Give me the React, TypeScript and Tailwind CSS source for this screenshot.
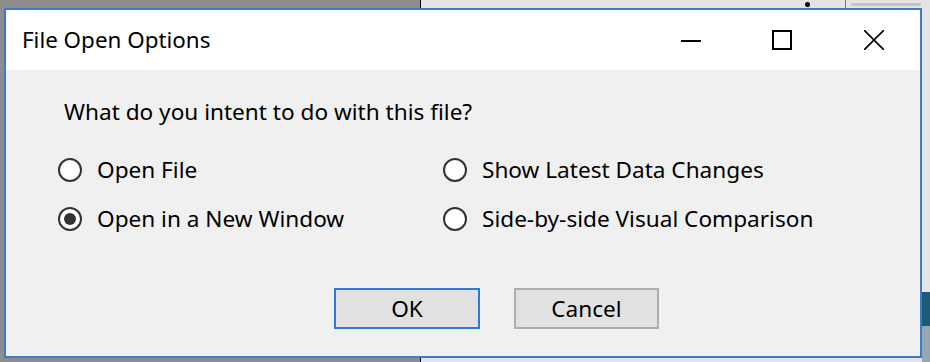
import React from 'react';

const font = { fontFamily: '"Noto Sans", "Open Sans", Arial, sans-serif' };

const Radio = ({ checked, label }: { checked?: boolean; label: string }) => (
  <label className="flex items-center gap-[15px] h-[28px]">
    <span className="w-[24px] h-[24px] rounded-full border-2 border-[#333333] bg-white flex items-center justify-center">
      {checked && <span className="w-[12px] h-[12px] rounded-full bg-[#333333]" />}
    </span>
    <span className="text-[22.6px] text-black leading-[28px]">{label}</span>
  </label>
);

export default function App() {
  return (
    <div className="relative w-[930px] h-[362px] overflow-hidden bg-[#8d8d8d]" style={font}>
      {/* desktop behind the dialog */}
      <div className="absolute left-[420px] top-0 right-0 bottom-0 bg-[#e4e4e4] border-l border-black">
        <div className="absolute left-[384px] top-[2px] w-[5px] h-[5px] rounded-full bg-black" />
        <div className="absolute left-[424px] top-[0px] w-[1px] h-[8px] bg-[#777777]" />
        <div className="absolute left-[430px] top-[3px] w-[70px] h-[3px] bg-[#c4c4c4]" />
      </div>
      <div className="absolute left-[922px] top-[292px] w-[8px] h-[34px] bg-[#1c5a78]" />
      <div className="absolute left-[922px] top-[326px] w-[8px] h-[36px] bg-[#98a6b2]" />

      {/* dialog window */}
      <div className="absolute left-[4px] top-[8px] w-[918px] h-[350px] border-2 border-[#3b7cc9] bg-[#f0f0f0] flex flex-col">
        <div className="h-[60px] bg-white flex items-center justify-between">
          <span className="pl-[16px] text-[22.4px] text-black">File Open Options</span>
          <div className="flex items-center h-full">
            <div className="w-[90px] h-full flex items-center justify-center">
              <svg width="20" height="20" viewBox="0 0 20 20">
                <line x1="0" y1="11" x2="20" y2="11" stroke="#000" strokeWidth="2" />
              </svg>
            </div>
            <div className="w-[92px] h-full flex items-center justify-center">
              <svg width="20" height="20" viewBox="0 0 20 20">
                <rect x="1" y="1" width="18" height="18" fill="none" stroke="#000" strokeWidth="2" />
              </svg>
            </div>
            <div className="w-[92px] h-full flex items-center justify-center">
              <svg width="20" height="20" viewBox="0 0 20 20">
                <path d="M0 0 L20 20 M20 0 L0 20" stroke="#000" strokeWidth="1.6" />
              </svg>
            </div>
          </div>
        </div>

        <div className="flex-1 pt-[28px]">
          <p className="pl-[58px] text-[22.6px] leading-[28px] text-black">What do you intent to do with this file?</p>
          <div className="grid grid-cols-[385px_1fr] gap-y-[21px] pl-[52px] mt-[30px]">
            <Radio label="Open File" />
            <Radio label="Show Latest Data Changes" />
            <Radio checked label="Open in a New Window" />
            <Radio label="Side-by-side Visual Comparison" />
          </div>
          <div className="flex gap-[34px] pl-[328px] mt-[55px]">
            <button className="w-[146px] h-[41px] border-2 border-[#2f79d0] bg-[#e1e1e1] text-[22.6px] text-black">OK</button>
            <button className="w-[145px] h-[41px] border-2 border-[#adadad] bg-[#e1e1e1] text-[22.6px] text-black">Cancel</button>
          </div>
        </div>
      </div>
    </div>
  );
}
